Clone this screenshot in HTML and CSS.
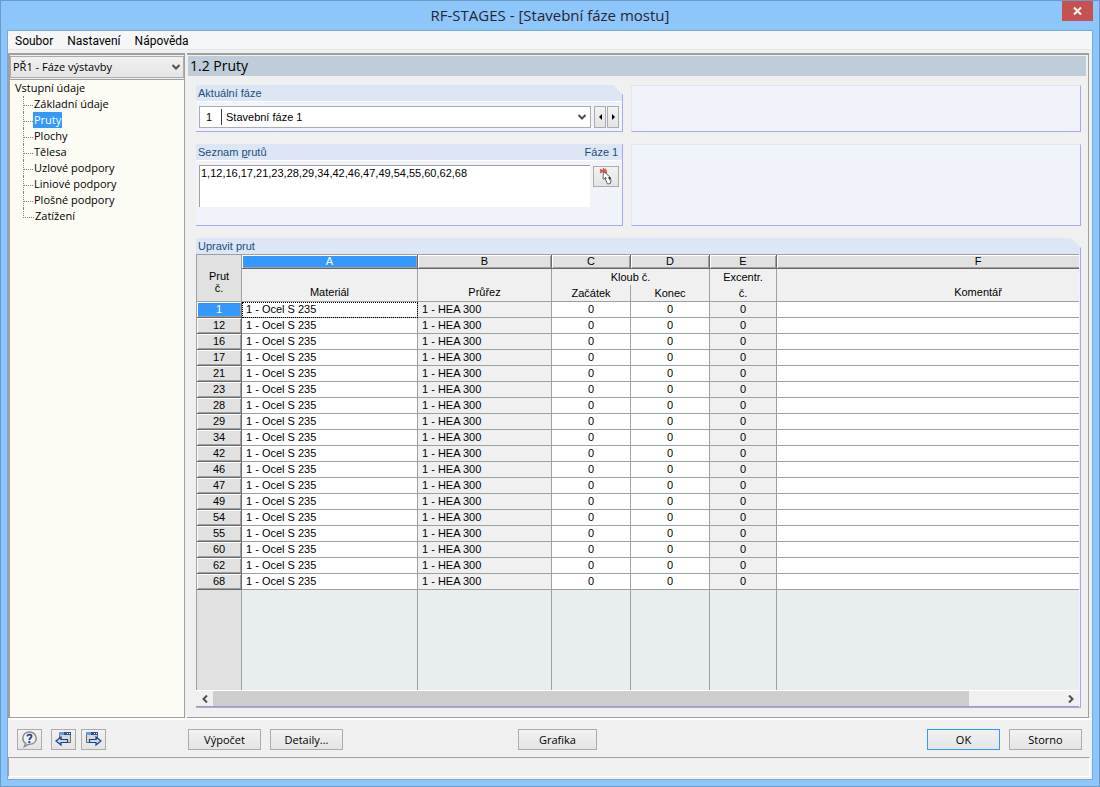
FILE: index.html
```html
<!DOCTYPE html>
<html lang="cs">
<head>
<meta charset="utf-8">
<title>RF-STAGES - [Stavební fáze mostu]</title>
<link rel="stylesheet" href="styles.css">
</head>
<body>
<div class="window">
  <header class="titlebar">
    <h1 class="title">RF-STAGES - [Stavební fáze mostu]</h1>
    <button class="close" aria-label="Zavřít"><svg width="9" height="8" viewBox="0 0 9 8"><path d="M1 0.5 8 7.5M8 0.5 1 7.5" stroke="#fff" stroke-width="2" fill="none"/></svg></button>
  </header>
  <div class="client">
    <nav class="menubar">
      <button class="menu">Soubor</button>
      <button class="menu">Nastavení</button>
      <button class="menu">Nápověda</button>
    </nav>
    <div class="workspace">
      <aside class="sidebar">
        <div class="case">
          <select class="case-select" aria-label="Zatěžovací stav"><option>PŘ1 - Fáze výstavby</option></select>
          <svg class="chevron" width="8" height="6" viewBox="0 0 8 6"><path d="M0.5 1 4 4.5 7.5 1" stroke="#505050" stroke-width="2" fill="none"/></svg>
        </div>
        <div class="tree">
          <a class="tree-root" href="#">Vstupní údaje</a>
          <ul class="tree-list">
            <li><a href="#">Základní údaje</a></li>
            <li><a class="selected" href="#">Pruty</a></li>
            <li><a href="#">Plochy</a></li>
            <li><a href="#">Tělesa</a></li>
            <li><a href="#">Uzlové podpory</a></li>
            <li><a href="#">Liniové podpory</a></li>
            <li><a href="#">Plošné podpory</a></li>
            <li><a href="#">Zatížení</a></li>
          </ul>
        </div>
      </aside>
      <main class="panel">
        <h2 class="panel-title">1.2 Pruty</h2>
        <div class="groups">
          <section class="group cut">
            <h3 class="group-head"><label for="phase">Aktuální fáze</label></h3>
            <div class="group-body phase-row">
              <div class="phase">
                <span class="phase-no">1</span>
                <select class="phase-select" id="phase"><option>Stavební fáze 1</option></select>
                <svg class="chevron" width="8" height="6" viewBox="0 0 8 6"><path d="M0.5 1 4 4.5 7.5 1" stroke="#505050" stroke-width="2" fill="none"/></svg>
              </div>
              <div class="steps">
                <button class="btn step" aria-label="Předchozí"><svg width="3" height="6" viewBox="0 0 3 6"><path d="M3 0v6L0 3z"/></svg></button>
                <button class="btn step" aria-label="Další"><svg width="3" height="6" viewBox="0 0 3 6"><path d="M0 0v6L3 3z"/></svg></button>
              </div>
            </div>
          </section>
          <section class="group plain"></section>
          <section class="group">
            <h3 class="group-head"><label for="members">Seznam <u>p</u>rutů</label><span>Fáze 1</span></h3>
            <div class="group-body list-row">
              <textarea class="members" id="members" spellcheck="false">1,12,16,17,21,23,28,29,34,42,46,47,49,54,55,60,62,68</textarea>
              <button class="btn pick" aria-label="Vybrat pruty">
                <svg width="15" height="17" viewBox="0 0 15 17"><path d="M1 5 7 1M1 1.500 8 5M4.500 0v5M1 3h7" stroke="#d4594f" stroke-width="1.400"/><path d="M4.500 3.500 4 11 6 10.500 8.500 16 11.500 15.500 12 12 10.500 8.500z" fill="#fff" stroke="#666" stroke-width="1"/><path d="M5.500 10 7 9 7.500 11zM9 9.500 11.500 9 11 12.500z" fill="#1a1a30"/></svg>
              </button>
            </div>
          </section>
          <section class="group plain"></section>
          <section class="group wide cut">
            <h3 class="group-head">Upravit prut</h3>
            <div class="sheet">
              <div class="grid-view">
              <table class="grid">
                <colgroup><col class="w-no"><col class="w-mat"><col class="w-sec"><col class="w-rel"><col class="w-rel"><col class="w-ecc"><col></colgroup>
                <thead>
                  <tr class="letters"><th class="corner" rowspan="3">Prut<br>č.</th><th class="active">A</th><th>B</th><th>C</th><th>D</th><th>E</th><th>F</th></tr>
                  <tr class="names"><th class="low" rowspan="2">Materiál</th><th class="low" rowspan="2">Průřez</th><th class="open" colspan="2">Kloub č.</th><th class="open">Excentr.</th><th class="low" rowspan="2">Komentář</th></tr>
                  <tr class="names sub"><th>Začátek</th><th>Konec</th><th>č.</th></tr>
                </thead>
                <tbody id="rows"></tbody>
              </table>
              </div>
              <div class="scroll">
                <button class="scroll-btn" aria-label="Doleva"><svg width="6" height="8" viewBox="0 0 6 8"><path d="M5 0.500 1.500 4 5 7.500" stroke="#505050" stroke-width="2" fill="none"/></svg></button>
                <div class="track"><div class="thumb"></div></div>
                <button class="scroll-btn" aria-label="Doprava"><svg width="6" height="8" viewBox="0 0 6 8"><path d="M1 0.500 4.500 4 1 7.500" stroke="#505050" stroke-width="2" fill="none"/></svg></button>
              </div>
            </div>
          </section>
        </div>
      </main>
    </div>
    <footer class="actions">
      <button class="btn tool" aria-label="Nápověda">
        <svg width="17" height="17" viewBox="0 0 17 17"><path d="M8.500 1C4.500 1 1.800 3.800 1.800 7.200c0 2.400 1.400 4.300 3 5.200L3.500 15.500l4.700-2.300c4.600 0 7-2.700 7-6S12.500 1 8.500 1z" fill="#eef0f6" stroke="#8c8c8c" stroke-width="1.500"/><path d="M6.300 5.300C6.500 3 11 3 10.600 5.400 10.300 7 8.400 7.200 8.300 9" stroke="#33427c" stroke-width="1.800" fill="none"/><path d="M7.300 10h2v2h-2z" fill="#33427c"/></svg>
      </button>
      <button class="btn tool" aria-label="Předchozí tabulka">
        <svg width="17" height="17" viewBox="0 0 17 17"><path d="M4.500 1.500h11v10h-11z" fill="#d8d8d8" stroke="#6c6c6c"/><path d="M4 1h12v3H4z" fill="#2c5296"/><path d="M4 1h5v3H4z" fill="#6b9bd6"/><path d="M12 2h1v1h-1zM14 2h1v1h-1z" fill="#fff"/><path d="M1 10 6 6V8.500H12.500v3H6V14z" fill="#b5defa" stroke="#263f7c" stroke-width="1.200"/></svg>
      </button>
      <button class="btn tool" aria-label="Další tabulka">
        <svg width="17" height="17" viewBox="0 0 17 17"><path d="M1.500 1.500h11v10h-11z" fill="#d8d8d8" stroke="#6c6c6c"/><path d="M1 1h12v3H1z" fill="#2c5296"/><path d="M1 1h5v3H1z" fill="#6b9bd6"/><path d="M9 2h1v1H9zM11 2h1v1h-1z" fill="#fff"/><path d="M16 10 11 6V8.500H4.500v3H11V14z" fill="#b5defa" stroke="#263f7c" stroke-width="1.200"/></svg>
      </button>
      <button class="btn text calc">Výpočet</button>
      <button class="btn text">Detaily...</button>
      <button class="btn text graphic">Grafika</button>
      <button class="btn text default">OK</button>
      <button class="btn text">Storno</button>
    </footer>
    <div class="status"></div>
  </div>
</div>
<script src="rows.js"></script>
</body>
</html>
```
FILE: rows.js
```js
const members = [1, 12, 16, 17, 21, 23, 28, 29, 34, 42, 46, 47, 49, 54, 55, 60, 62, 68];
const body = document.getElementById('rows');
body.innerHTML = members.map((no, i) =>
  `<tr class="data${i === 0 ? ' current' : ''}"><th>${no}</th><td>1 - Ocel S 235</td><td class="locked">1 - HEA 300</td>` +
  '<td class="num">0</td><td class="num">0</td><td class="num locked">0</td><td></td></tr>'
).join('') + '<tr class="filler"><th></th><td></td><td></td><td></td><td></td><td></td><td></td></tr>';
```
FILE: styles.css
```css
* { box-sizing: border-box; }

body { margin: 0; font: 11px/16px "Open Sans", sans-serif; color: #000; }
h1, h2, h3 { margin: 0; font-weight: normal; }
button, select, textarea { font: inherit; color: inherit; border-radius: 0; margin: 0; }
svg { display: block; }

.window { min-height: 100vh; display: flex; flex-direction: column; padding: 0 6px 6px; border: 1px solid #6b9ac6; background: #8cc6fa; }
.titlebar { position: relative; display: flex; justify-content: center; height: 29px; }
.title { font: 15px/29px "Open Sans", sans-serif; color: #2b2430; }
.close { position: absolute; top: 0; right: 0; width: 31px; height: 20px; display: grid; place-items: center; padding: 0; border: 0; background: #c75050; }

.client { flex: 1; display: flex; flex-direction: column; border: 1px solid #7aaad8; background: #f0f0f0; }
.menubar { display: flex; height: 19px; padding-left: 7px; gap: 14px; margin-bottom: 3px; background: #f5f6f7; border-bottom: 1px solid #e6e6e6; }
.menu { padding: 2px 0 0; border: 0; background: none; font: 12px/16px Roboto, sans-serif; }

.workspace { flex: 1; display: grid; grid-template-columns: 177px minmax(0, 1fr); gap: 2px; padding-right: 3px; }
.sidebar { display: flex; flex-direction: column; border: 1px solid #a0a0a0; border-width: 2px 1px 1px 2px; background: #fcfcf4; }
.case { position: relative; padding: 1px 0 1px; background: #f0f0f0; border-bottom: 1px solid #a0a0a0; }
.case-select { appearance: none; width: 100%; height: 22px; padding: 0 2px; border: 1px solid #acacac; background: linear-gradient(#f0f0f0, #e5e5e5); display: block; }
.chevron { position: absolute; right: 4px; top: 9px; pointer-events: none; }
.tree { flex: 1; padding-left: 5px; }
.tree a { color: #000; text-decoration: none; }
.tree-root { display: block; }
.tree-list { list-style: none; margin: 0; padding: 0 0 0 8px; }
.tree-list li { display: flex; height: 16px; border-left: 1px dotted #808080; }
.tree-list li::before { content: ""; width: 9px; height: 9px; border-bottom: 1px dotted #808080; }
.tree-list li:last-child { border-left: 0; }
.tree-list li:last-child::before { width: 10px; border-left: 1px dotted #808080; }
.tree-list a { padding: 0 1px; }
.tree .selected { background: #3399ff; color: #fff; }

.panel { display: flex; flex-direction: column; padding: 1px 2px 9px 1px; border: 1px solid #a0a0a0; border-width: 2px 1px 1px 0; background: #f0f0f0; }
.panel-title { height: 20px; padding-left: 2px; font: 14px/20px "Open Sans", sans-serif; background: #bfccd9; }
.groups { flex: 1; display: grid; grid-template-columns: minmax(0, 19fr) minmax(0, 20fr); grid-template-rows: 47px 82px minmax(0, 1fr); column-gap: 8px; row-gap: 12px; padding: 9px 5px 0 8px; }
.group { display: flex; flex-direction: column; min-width: 0; border: 1px solid #a8a8f0; border-width: 0 1px 1px 0; background: #f0f4fa; font-family: "Liberation Sans", sans-serif; }
.plain { border-top: 1px solid #dce6f5; border-left: 1px solid #dce6f5; }
.wide { grid-column: 1 / 3; }
.group-head { display: flex; justify-content: space-between; height: 16px; padding: 0 4px 0 2px; font-size: 11px; line-height: 16px; color: #1e4e79; background: #dce6f5; }
.cut { clip-path: polygon(0 0, calc(100% - 10px) 0, 100% 10px, 100% 100%, 0 100%); }
.group-body { display: flex; border-top: 1px solid #fff; padding: 3px 3px 0; }
.phase-row { gap: 3px; }
.phase { position: relative; flex: 1; display: flex; height: 22px; margin-top: 1px; border: 1px solid #acacac; background: #fff; line-height: 20px; }
.phase-no { width: 22px; margin: 2px 0; line-height: 16px; padding-left: 6px; border-right: 1px solid #404040; }
.phase-select { appearance: none; flex: 1; border: 0; background: none; padding: 0 4px; }
.phase .chevron { top: 7px; }
.steps { display: flex; gap: 1px; padding-top: 1px; }
.btn { display: grid; place-items: center; padding: 0; border: 1px solid #acacac; background: linear-gradient(#f2f2f2, #e4e4e4); }
.step { width: 12px; height: 22px; }
.list-row { gap: 3px; padding-top: 4px; }
.members { flex: 1; height: 42px; padding: 0 1px; border: 1px solid #a0a0a0; border-width: 1px 0 0 1px; background: #fff; resize: none; overflow: hidden; line-height: 15px; outline: 0; }
.pick { width: 26px; height: 21px; margin-top: 1px; }

.sheet { flex: 1; display: flex; flex-direction: column; margin-right: 1px; border-bottom: 1px solid #a0a0a0; }
.grid-view { flex: 1; display: grid; overflow: hidden; }
.grid { width: calc(100% + 101px); min-height: 100%; table-layout: fixed; border-spacing: 0; border-left: 1px solid #a0a0a0; border-top: 1px solid #a0a0a0; }
.w-no { width: 45px; }
.w-mat { width: 176px; }
.w-sec { width: 134px; }
.w-rel { width: 79px; }
.w-ecc { width: 67px; }
.grid th, .grid td { padding: 0; font-weight: normal; border: 1px solid #a0a0a0; border-width: 0 1px 1px 0; overflow: hidden; white-space: nowrap; }
.letters { height: 14px; }
.grid .letters th { line-height: 13px; background: #e1e1e1; border-color: #696969; box-shadow: inset 1px 1px #fff, inset -1px -1px #a0a0a0; }
.grid .letters .active { background: #3399ff; color: #fff; }
.grid .letters .corner { padding-top: 8px; line-height: 12px; border-color: #a0a0a0; box-shadow: none; }
.names { height: 16px; }
.names.sub { height: 17px; }
.names th { line-height: 15px; background: #f0f0f0; vertical-align: middle; }
.grid .low { vertical-align: bottom; line-height: 18px; }
.grid .open { border-bottom: 0; }
.data { height: 16px; line-height: 15px; }
.data th { background: #e1e1e1; border-color: #696969; box-shadow: inset 1px 1px #fff, inset -1px -1px #a0a0a0; }
.grid .data td { padding-left: 4px; background: #fff; }
.grid .data .locked { background: #f0f0f0; }
.grid .data .num { padding: 0; text-align: center; }
.grid .current th { background: #3399ff; color: #fff; }
.current th + td { outline: 1px dotted #000; outline-offset: -1px; }
.grid .filler th, .grid .filler td { border-bottom: 0; background: #e8eeee; }
.grid .filler th { background: #e1e1e1; }
.scroll { display: flex; height: 16px; border-top: 1px solid #fff; background: #f0f0f0; }
.scroll-btn { width: 17px; display: grid; place-items: center; padding: 0; border: 0; background: none; }
.track { flex: 1; }
.thumb { width: 89%; height: 100%; background: #cdcdcd; }

.actions { display: flex; align-items: center; height: 39px; padding: 2px 10px 0 9px; border-top: 2px solid #fff; }
.tool { width: 25px; height: 21px; margin-right: 9px; }
.tool:nth-child(2) { margin-right: 5px; }
.text { width: 73px; height: 21px; margin-right: 9px; line-height: 19px; }
.calc { margin-left: 73px; }
.graphic { width: 79px; margin-left: 175px; margin-right: auto; }
.actions .graphic { margin-left: 166px; }
.default { border-color: #3399ff; }
.text:last-child { margin-right: 0; }
.status { height: 20px; margin: 0 2px 2px 0; border: 1px solid #a0a0a0; border-right-color: #fff; border-bottom-color: #fff; }
```
